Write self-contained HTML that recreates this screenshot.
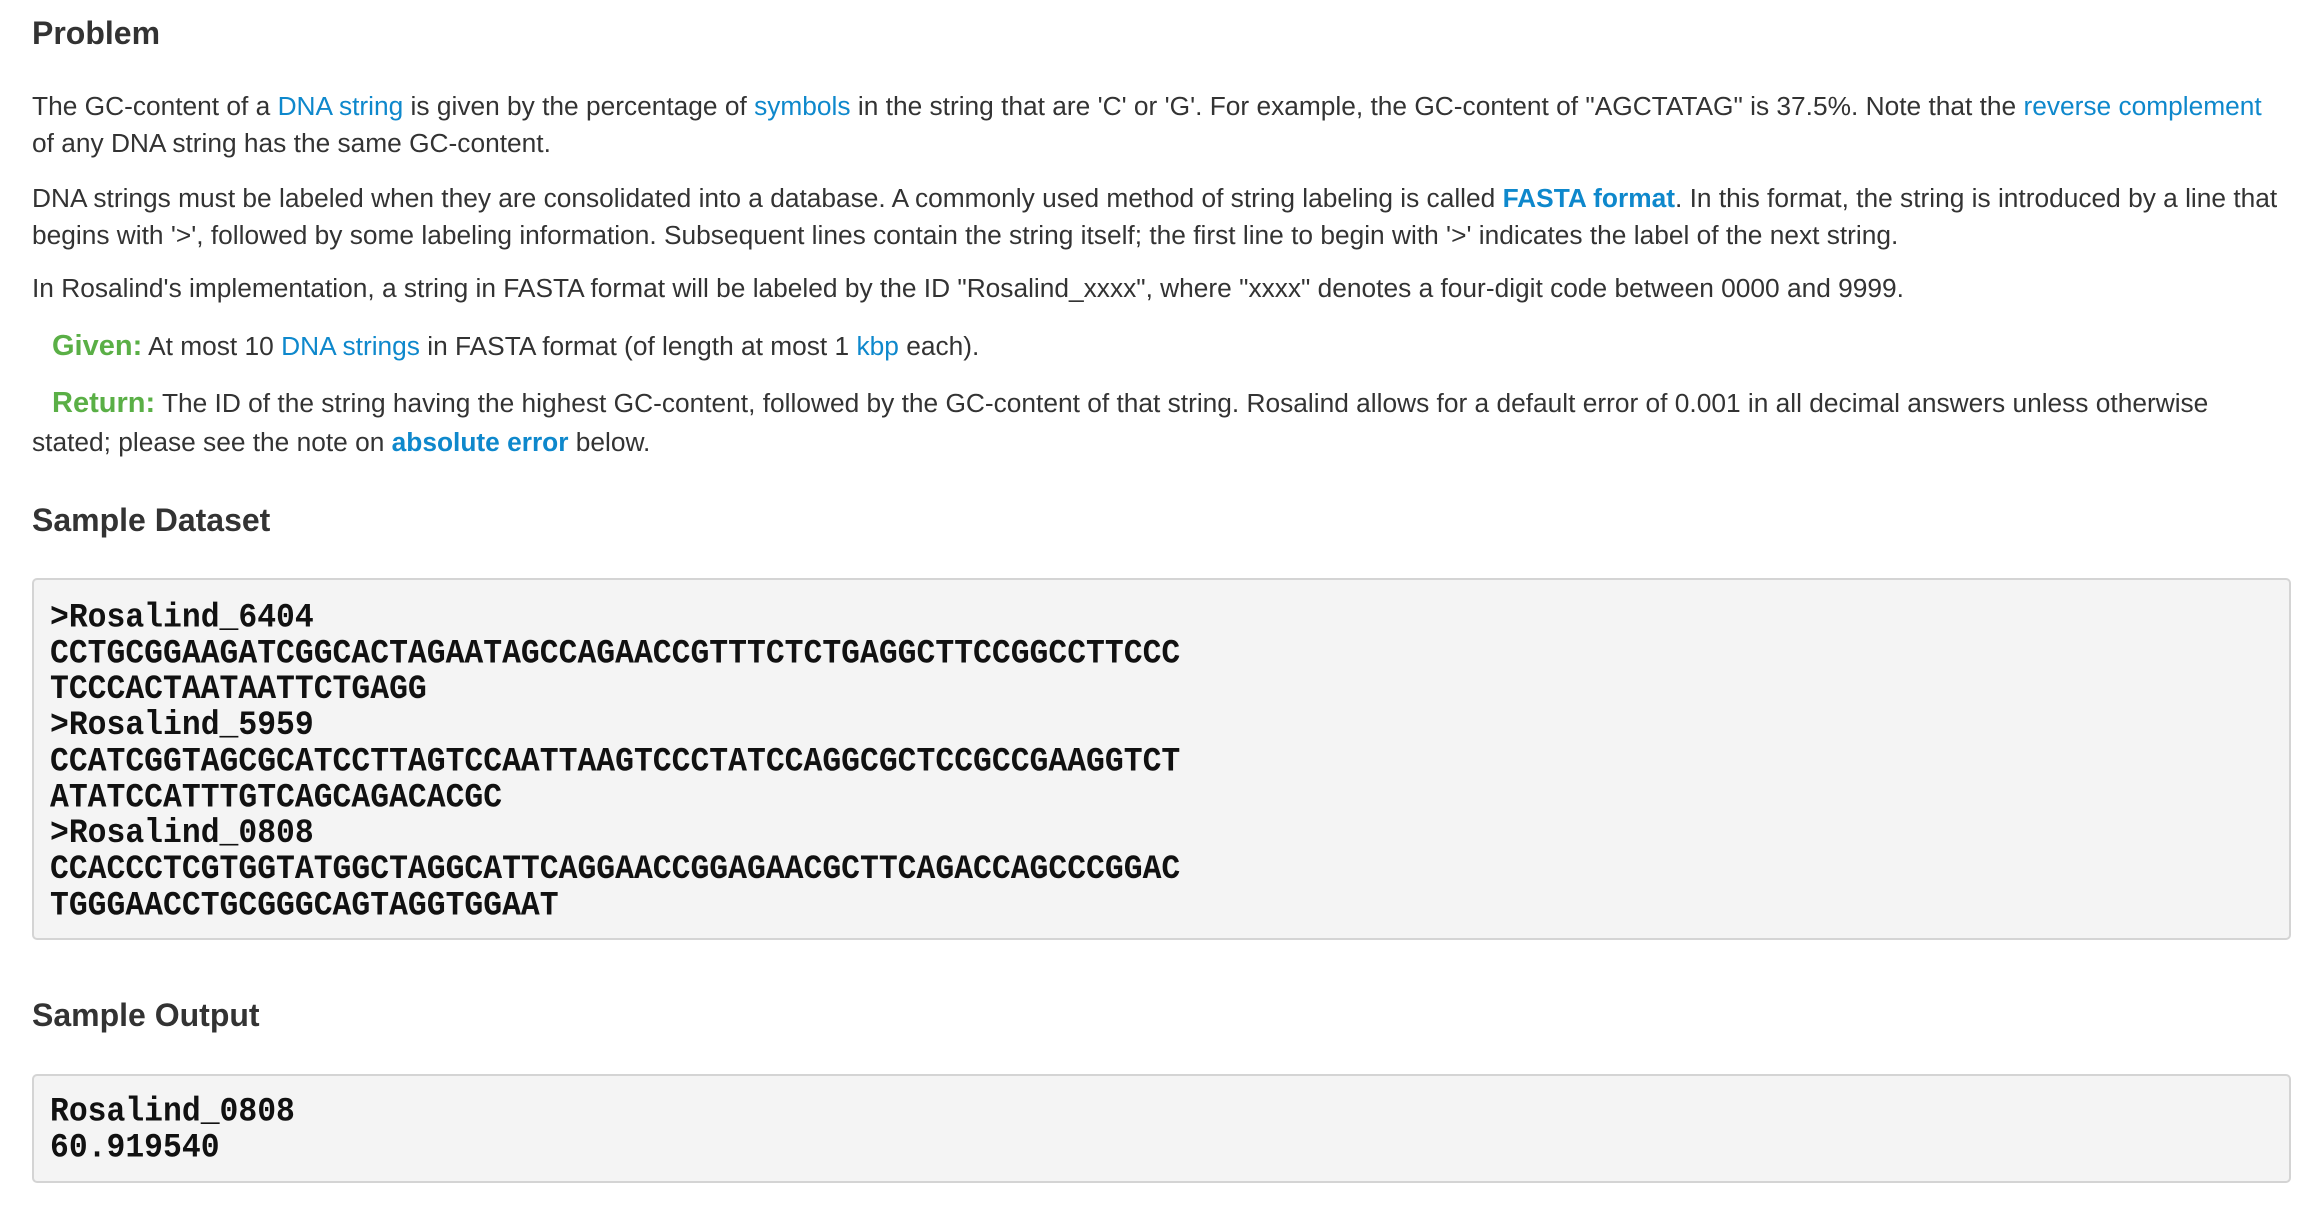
<!DOCTYPE html>
<html><head><meta charset="utf-8"><style>
body{margin:0;width:2318px;height:1210px;background:#fff;font-family:"Liberation Sans",Arial,sans-serif;color:#333;overflow:hidden;position:relative}
.l{position:absolute;left:32px;white-space:nowrap;font-size:26.3px;line-height:36px}
a{color:#0e88cc;text-decoration:none}
b.a{color:#0e88cc}
h2{position:absolute;left:32px;margin:0;font-size:32px;font-weight:bold;white-space:nowrap;line-height:36px;color:#333}
.g{color:#5aaf46;font-weight:bold;font-size:29px}
.box{position:absolute;left:32px;width:2259px;background:#f4f4f4;border:2px solid #d4d4d4;border-radius:5px;box-sizing:border-box}
pre{margin:0;position:absolute;left:16px;font-family:"Liberation Mono","DejaVu Sans Mono",monospace;font-weight:bold;font-size:31.4px;line-height:32.7px;color:#111;transform:scaleY(1.1);transform-origin:top left}
</style></head><body>
<h2 style="top:15px">Problem</h2>
<div class="l" style="top:88px">The GC-content of a <a>DNA string</a> is given by the percentage of <a>symbols</a> in the string that are 'C' or 'G'. For example, the GC-content of "AGCTATAG" is 37.5%. Note that the <a>reverse complement</a></div>
<div class="l" style="top:125px">of any DNA string has the same GC-content.</div>
<div class="l" style="top:180px">DNA strings must be labeled when they are consolidated into a database. A commonly used method of string labeling is called <b class="a">FASTA format</b>. In this format, the string is introduced by a line that</div>
<div class="l" style="top:217px">begins with '&gt;', followed by some labeling information. Subsequent lines contain the string itself; the first line to begin with '&gt;' indicates the label of the next string.</div>
<div class="l" style="top:270px">In Rosalind's implementation, a string in FASTA format will be labeled by the ID "Rosalind_xxxx", where "xxxx" denotes a four-digit code between 0000 and 9999.</div>
<div class="l" style="top:328px;left:52px"><span class="g">Given:</span> At most 10 <a>DNA strings</a> in FASTA format (of length at most 1 <a>kbp</a> each).</div>
<div class="l" style="top:385px;left:52px"><span class="g">Return:</span> The ID of the string having the highest GC-content, followed by the GC-content of that string. Rosalind allows for a default error of 0.001 in all decimal answers unless otherwise</div>
<div class="l" style="top:424px">stated; please see the note on <b class="a">absolute error</b> below.</div>
<h2 style="top:502px">Sample Dataset</h2>
<div class="box" style="top:578px;height:362px"><pre style="top:21px">&gt;Rosalind_6404
CCTGCGGAAGATCGGCACTAGAATAGCCAGAACCGTTTCTCTGAGGCTTCCGGCCTTCCC
TCCCACTAATAATTCTGAGG
&gt;Rosalind_5959
CCATCGGTAGCGCATCCTTAGTCCAATTAAGTCCCTATCCAGGCGCTCCGCCGAAGGTCT
ATATCCATTTGTCAGCAGACACGC
&gt;Rosalind_0808
CCACCCTCGTGGTATGGCTAGGCATTCAGGAACCGGAGAACGCTTCAGACCAGCCCGGAC
TGGGAACCTGCGGGCAGTAGGTGGAAT</pre></div>
<h2 style="top:997px">Sample Output</h2>
<div class="box" style="top:1074px;height:109px"><pre style="top:19px">Rosalind_0808
60.919540</pre></div>
</body></html>
